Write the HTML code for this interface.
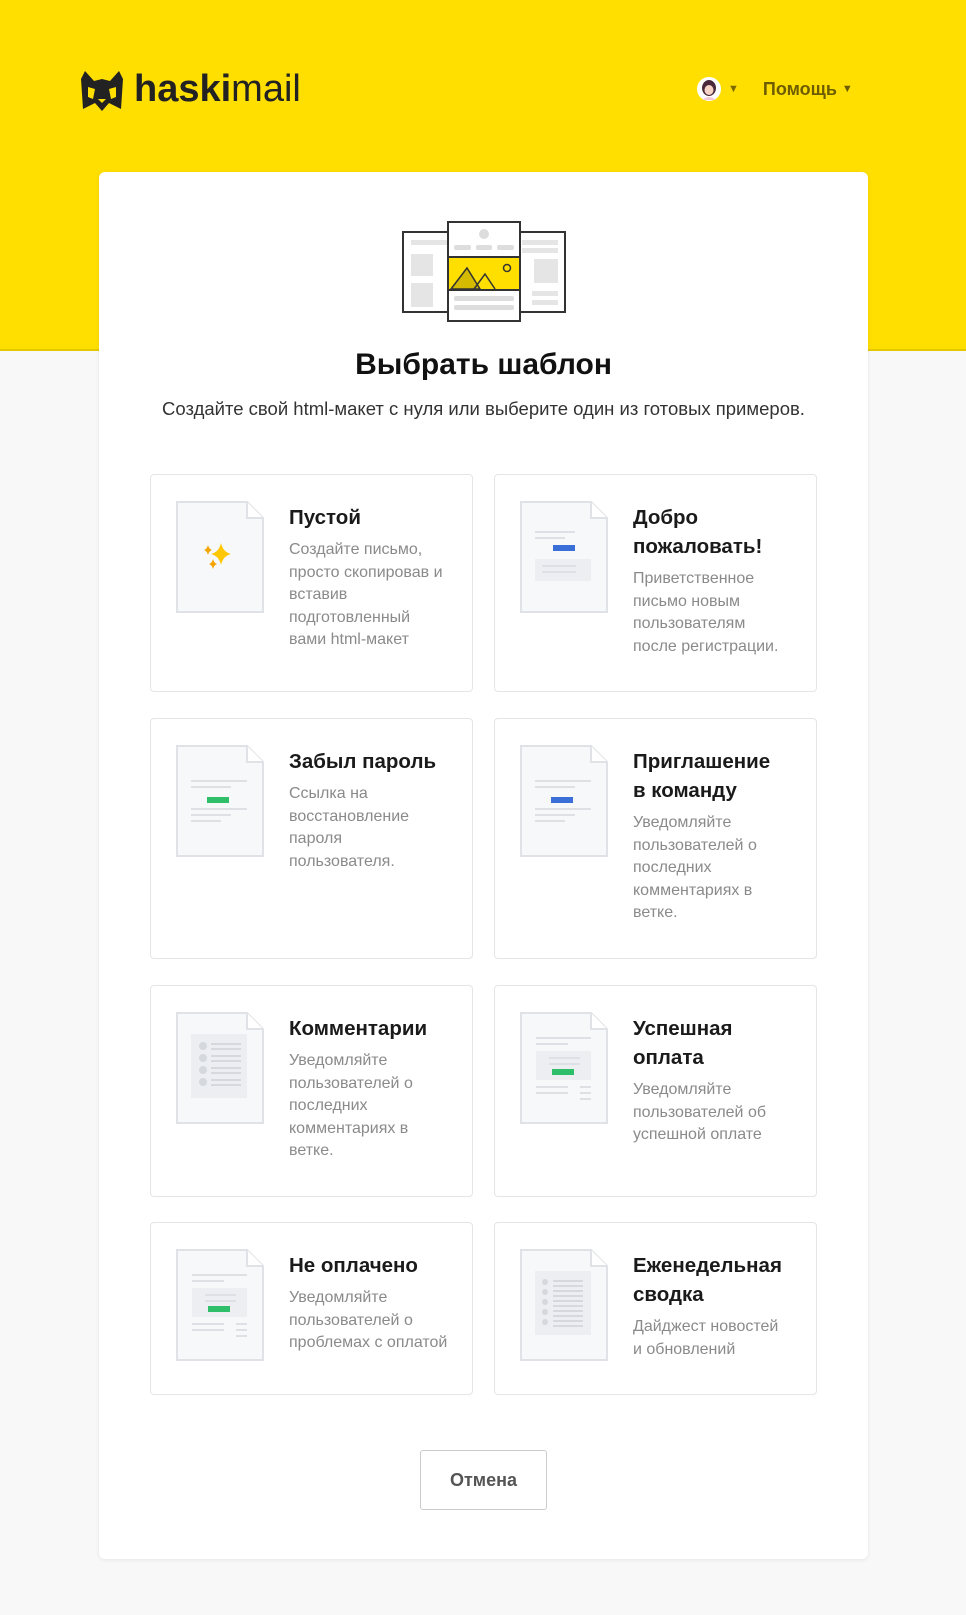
<!DOCTYPE html>
<html><head><meta charset="utf-8"><style>
*{margin:0;padding:0;box-sizing:border-box}
body{width:966px;height:1615px;background:#f8f8f8;font-family:"Liberation Sans",Arial,sans-serif;position:relative;overflow:hidden}
.top{position:absolute;left:0;top:0;width:966px;height:351px;background:#ffdf00;border-bottom:2px solid #e6c800}
.logo{position:absolute;left:79px;top:68px;display:flex;align-items:center}
.logo span{font-size:38px;color:#222;letter-spacing:0px;margin-left:9px}
.nav{position:absolute;top:76px;left:696px;display:flex;align-items:center;font-size:18px;font-weight:bold;color:#6e5d00}
.card{position:absolute;left:99px;top:172px;width:769px;height:1387px;background:#fff;border-radius:6px;box-shadow:0 1px 4px rgba(0,0,0,.08)}
h1{position:absolute;top:176px;width:100%;text-align:center;font-size:30px;color:#111}
.sub{position:absolute;top:226px;width:100%;text-align:center;font-size:18.5px;color:#333}
.tile{position:absolute;width:323px;border:1px solid #e5e5e5;border-radius:4px;background:#fff}
.tile svg{position:absolute;left:25px;top:26px}
.tile .t{position:absolute;left:138px;top:28px;width:156px}
.tile b{display:block;font-size:20.5px;line-height:29px;color:#1a1a1a}
.tile p{font-size:16px;line-height:22.6px;color:#8a8a8a;margin-top:7px}
.btn{position:absolute;left:321px;top:1278px;width:127px;height:60px;border:1px solid #ccc;border-radius:3px;font-size:18px;font-weight:bold;color:#555;text-align:center;line-height:58px}
</style></head><body>
<div class="top"></div>
<div class="logo">
<svg width="46" height="42" viewBox="0 0 46 42"><path d="M4 40 L2 10 L6 2 L15 12 L23 10 L31 12 L40 2 L44 10 L42 40 L30 34 L23 42 L16 34 Z" fill="#222"/><path d="M9 18 L16 20 L14 30 L9 28 Z M37 18 L30 20 L32 30 L37 28Z" fill="#ffdf00"/><path d="M19 30 h8 l-4 4z" fill="#ffdf00"/></svg>
<span><b>haski</b>mail</span></div>
<div class="nav">
<svg width="26" height="26" viewBox="0 0 26 26"><circle cx="13" cy="13" r="12" fill="#fff"/><ellipse cx="13" cy="12" rx="7" ry="8" fill="#4a2a3a"/><ellipse cx="13" cy="14" rx="4.5" ry="5" fill="#f6d3c4"/><path d="M6 24 q7-6 14 0" fill="#f4c9d7"/></svg>
<span style="font-size:11px;margin-left:6px;color:#7a6a00">▼</span>
<span style="margin-left:24px">Помощь</span><span style="font-size:11px;margin-left:5px">▼</span></div>
<div class="card">
<svg style="position:absolute;left:303px;top:49px" width="164" height="101" viewBox="0 0 164 101">
<rect x="1" y="11" width="47" height="80" fill="#fff" stroke="#333" stroke-width="2"/>
<rect x="116" y="11" width="47" height="80" fill="#fff" stroke="#333" stroke-width="2"/>
<rect x="9" y="19" width="36" height="5" fill="#e5e5e5"/><rect x="9" y="33" width="22" height="22" fill="#e5e5e5"/><rect x="9" y="62" width="22" height="24" fill="#e5e5e5"/>
<rect x="120" y="19" width="36" height="5" fill="#e5e5e5"/><rect x="120" y="27" width="36" height="5" fill="#e5e5e5"/><rect x="132" y="38" width="24" height="24" fill="#e5e5e5"/><rect x="130" y="70" width="26" height="5" fill="#e5e5e5"/><rect x="130" y="79" width="26" height="5" fill="#e5e5e5"/>
<rect x="46" y="1" width="72" height="99" fill="#fff" stroke="#333" stroke-width="2"/>
<circle cx="82" cy="13" r="5" fill="#ddd"/><rect x="52" y="24" width="17" height="5" rx="2" fill="#ddd"/><rect x="74" y="24" width="16" height="5" rx="2" fill="#ddd"/><rect x="95" y="24" width="17" height="5" rx="2" fill="#ddd"/>
<rect x="46" y="36" width="72" height="33" fill="#ffdf00" stroke="#333" stroke-width="2"/>
<path d="M49 68 L65 47 L78 68 Z" fill="#d4bb00" stroke="#333" stroke-width="1.5"/><path d="M72 68 L83 53 L93 68" fill="none" stroke="#333" stroke-width="1.5"/><circle cx="105" cy="47" r="3.5" fill="none" stroke="#333" stroke-width="1.5"/>
<rect x="52" y="75" width="60" height="5" rx="2" fill="#ddd"/><rect x="52" y="84" width="60" height="5" rx="2" fill="#ddd"/>
</svg>
<h1>Выбрать шаблон</h1>
<div class="sub">Создайте свой html-макет с нуля или выберите один из готовых примеров.</div>

<div class="tile" style="left:51px;top:302px;height:218px">
<svg width="88" height="112" viewBox="0 0 88 112"><path d="M1 1H71L87 17V111H1Z" fill="#f7f8fa" stroke="#dfe2e6" stroke-width="2"/><path d="M71 1V17H87" fill="#fff" stroke="#dfe2e6" stroke-width="2"/>
<path d="M45 42 q2 9 10 11 q-8 2 -10 11 q-2 -9 -10 -11 q8 -2 10 -11z" fill="#ffc700"/><path d="M32 44 q1 4 4 5 q-3 1 -4 5 q-1 -4 -4 -5 q3 -1 4 -5z" fill="#f5a400"/><path d="M37 58 q1 4 4 5 q-3 1 -4 5 q-1 -4 -4 -5 q3 -1 4 -5z" fill="#f5a400"/></svg>
<div class="t"><b>Пустой</b><p>Создайте письмо, просто скопировав и вставив подготовленный вами html-макет</p></div></div>

<div class="tile" style="left:395px;top:302px;height:218px">
<svg width="88" height="112" viewBox="0 0 88 112"><path d="M1 1H71L87 17V111H1Z" fill="#f7f8fa" stroke="#dfe2e6" stroke-width="2"/><path d="M71 1V17H87" fill="#fff" stroke="#dfe2e6" stroke-width="2"/><rect x="15" y="30" width="40" height="2" fill="#dde0e4"/><rect x="15" y="36" width="30" height="2" fill="#dde0e4"/><rect x="33" y="44" width="22" height="6" fill="#3a6fd8"/><rect x="15" y="58" width="56" height="22" fill="#eceef1"/><rect x="22" y="64" width="34" height="2" fill="#dde0e4"/><rect x="22" y="70" width="34" height="2" fill="#dde0e4"/></svg>
<div class="t"><b>Добро пожаловать!</b><p>Приветственное письмо новым пользователям после регистрации.</p></div></div>

<div class="tile" style="left:51px;top:546px;height:241px">
<svg width="88" height="112" viewBox="0 0 88 112"><path d="M1 1H71L87 17V111H1Z" fill="#f7f8fa" stroke="#dfe2e6" stroke-width="2"/><path d="M71 1V17H87" fill="#fff" stroke="#dfe2e6" stroke-width="2"/><rect x="15" y="35" width="56" height="2" fill="#dde0e4"/><rect x="15" y="41" width="40" height="2" fill="#dde0e4"/><rect x="31" y="52" width="22" height="6" fill="#2fbf6a"/><rect x="15" y="63" width="56" height="2" fill="#dde0e4"/><rect x="15" y="69" width="40" height="2" fill="#dde0e4"/><rect x="15" y="75" width="30" height="2" fill="#dde0e4"/></svg>
<div class="t"><b>Забыл пароль</b><p>Ссылка на восстановление пароля пользователя.</p></div></div>

<div class="tile" style="left:395px;top:546px;height:241px">
<svg width="88" height="112" viewBox="0 0 88 112"><path d="M1 1H71L87 17V111H1Z" fill="#f7f8fa" stroke="#dfe2e6" stroke-width="2"/><path d="M71 1V17H87" fill="#fff" stroke="#dfe2e6" stroke-width="2"/><rect x="15" y="35" width="56" height="2" fill="#dde0e4"/><rect x="15" y="41" width="40" height="2" fill="#dde0e4"/><rect x="31" y="52" width="22" height="6" fill="#3a6fd8"/><rect x="15" y="63" width="56" height="2" fill="#dde0e4"/><rect x="15" y="69" width="40" height="2" fill="#dde0e4"/><rect x="15" y="75" width="30" height="2" fill="#dde0e4"/></svg>
<div class="t"><b>Приглашение<br>в команду</b><p>Уведомляйте пользователей о последних комментариях в ветке.</p></div></div>

<div class="tile" style="left:51px;top:813px;height:212px">
<svg width="88" height="112" viewBox="0 0 88 112"><path d="M1 1H71L87 17V111H1Z" fill="#f7f8fa" stroke="#dfe2e6" stroke-width="2"/><path d="M71 1V17H87" fill="#fff" stroke="#dfe2e6" stroke-width="2"/><rect x="15" y="22" width="56" height="64" fill="#eceef1"/><g fill="#d5d8dc"><circle cx="27" cy="34" r="4"/><circle cx="27" cy="46" r="4"/><circle cx="27" cy="58" r="4"/><circle cx="27" cy="70" r="4"/><rect x="35" y="31" width="30" height="2"/><rect x="35" y="36" width="30" height="2"/><rect x="35" y="43" width="30" height="2"/><rect x="35" y="48" width="30" height="2"/><rect x="35" y="55" width="30" height="2"/><rect x="35" y="60" width="30" height="2"/><rect x="35" y="67" width="30" height="2"/><rect x="35" y="72" width="30" height="2"/></g></svg>
<div class="t"><b>Комментарии</b><p>Уведомляйте пользователей о последних комментариях в ветке.</p></div></div>

<div class="tile" style="left:395px;top:813px;height:212px">
<svg width="88" height="112" viewBox="0 0 88 112"><path d="M1 1H71L87 17V111H1Z" fill="#f7f8fa" stroke="#dfe2e6" stroke-width="2"/><path d="M71 1V17H87" fill="#fff" stroke="#dfe2e6" stroke-width="2"/><rect x="16" y="25" width="55" height="2" fill="#dde0e4"/><rect x="16" y="31" width="32" height="2" fill="#dde0e4"/><rect x="16" y="39" width="55" height="29" fill="#eceef1"/><rect x="29" y="45" width="31" height="2" fill="#dde0e4"/><rect x="29" y="51" width="31" height="2" fill="#dde0e4"/><rect x="32" y="57" width="22" height="6" fill="#2fbf6a"/><rect x="16" y="74" width="32" height="2" fill="#dde0e4"/><rect x="16" y="80" width="32" height="2" fill="#dde0e4"/><rect x="60" y="74" width="11" height="2" fill="#dde0e4"/><rect x="60" y="80" width="11" height="2" fill="#dde0e4"/><rect x="60" y="86" width="11" height="2" fill="#dde0e4"/></svg>
<div class="t"><b>Успешная оплата</b><p>Уведомляйте пользователей об успешной оплате</p></div></div>

<div class="tile" style="left:51px;top:1050px;height:173px">
<svg width="88" height="112" viewBox="0 0 88 112"><path d="M1 1H71L87 17V111H1Z" fill="#f7f8fa" stroke="#dfe2e6" stroke-width="2"/><path d="M71 1V17H87" fill="#fff" stroke="#dfe2e6" stroke-width="2"/><rect x="16" y="25" width="55" height="2" fill="#dde0e4"/><rect x="16" y="31" width="32" height="2" fill="#dde0e4"/><rect x="16" y="39" width="55" height="29" fill="#eceef1"/><rect x="29" y="45" width="31" height="2" fill="#dde0e4"/><rect x="29" y="51" width="31" height="2" fill="#dde0e4"/><rect x="32" y="57" width="22" height="6" fill="#2fbf6a"/><rect x="16" y="74" width="32" height="2" fill="#dde0e4"/><rect x="16" y="80" width="32" height="2" fill="#dde0e4"/><rect x="60" y="74" width="11" height="2" fill="#dde0e4"/><rect x="60" y="80" width="11" height="2" fill="#dde0e4"/><rect x="60" y="86" width="11" height="2" fill="#dde0e4"/></svg>
<div class="t" style="width:170px"><b>Не оплачено</b><p>Уведомляйте пользователей о проблемах с оплатой</p></div></div>

<div class="tile" style="left:395px;top:1050px;height:173px">
<svg width="88" height="112" viewBox="0 0 88 112"><path d="M1 1H71L87 17V111H1Z" fill="#f7f8fa" stroke="#dfe2e6" stroke-width="2"/><path d="M71 1V17H87" fill="#fff" stroke="#dfe2e6" stroke-width="2"/><rect x="15" y="22" width="56" height="64" fill="#eceef1"/><g fill="#d5d8dc"><circle cx="25" cy="33" r="3"/><circle cx="25" cy="43" r="3"/><circle cx="25" cy="53" r="3"/><circle cx="25" cy="63" r="3"/><circle cx="25" cy="73" r="3"/><rect x="33" y="31" width="30" height="2"/><rect x="33" y="36" width="30" height="2"/><rect x="33" y="41" width="30" height="2"/><rect x="33" y="46" width="30" height="2"/><rect x="33" y="51" width="30" height="2"/><rect x="33" y="56" width="30" height="2"/><rect x="33" y="61" width="30" height="2"/><rect x="33" y="66" width="30" height="2"/><rect x="33" y="71" width="30" height="2"/><rect x="33" y="76" width="30" height="2"/></g></svg>
<div class="t"><b>Еженедельная сводка</b><p>Дайджест новостей и обновлений</p></div></div>

<div class="btn">Отмена</div>
</div>
</body></html>
